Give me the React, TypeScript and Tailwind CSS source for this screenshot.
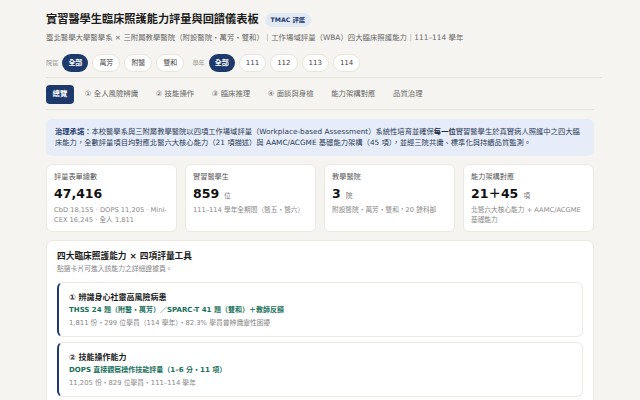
import React from 'react';

const FONT = "font-['DejaVu_Sans','Noto_Sans_CJK_TC',sans-serif]";

const campuses = ['全部', '萬芳', '附醫', '雙和'];
const years = ['全部', '111', '112', '113', '114'];
const tabs = ['總覽', '① 全人風險辨識', '② 技能操作', '③ 臨床推理', '④ 面談與身檢', '能力架構對應', '品質治理'];

const stats = [
  { label: '評量表單總數', value: '47,416', unit: '', sub: 'CbD 18,155 · DOPS 11,205 · Mini-CEX 16,245 · 全人 1,811' },
  { label: '實習醫學生', value: '859', unit: '位', sub: '111–114 學年全期間（醫五・醫六）' },
  { label: '教學醫院', value: '3', unit: '院', sub: '附設醫院・萬芳・雙和，20 餘科部' },
  { label: '能力架構對應', value: '21＋45', unit: '項', sub: '北醫六大核心能力 + AAMC/ACGME 基礎能力' },
];

const abilities = [
  {
    title: '① 辨識身心社靈高風險病患',
    tool: 'THSS 24 題（附醫・萬芳）／SPARC-T 41 題（雙和）＋教師反饋',
    meta: '1,811 份・299 位學員（114 學年）・82.3% 學員曾辨識靈性困擾',
  },
  {
    title: '② 技能操作能力',
    tool: 'DOPS 直接觀察操作技能評量（1–6 分・11 項）',
    meta: '11,205 份・829 位學員・111–114 學年',
  },
];

function Pill({ text, active }: { text: string; active?: boolean }) {
  return (
    <span
      className={
        active
          ? 'h-[18px] px-[6px] rounded-full bg-[#1e3a6d] text-white font-bold flex items-center text-[7px]'
          : 'h-[18px] px-[6px] rounded-full bg-white border border-[#e8e5dc] text-[#444] flex items-center text-[7px]'
      }
    >
      {text}
    </span>
  );
}

export default function App() {
  return (
    <div className={`min-h-[400px] bg-[#f5f4f0] ${FONT} text-[#1c1c1c]`}>
      <div className="pl-[46px] pr-[46px] pt-[12px] pb-[8px]">
        {/* Header */}
        <div className="flex items-center gap-[6px]">
          <h1 className="text-[11.2px] leading-[16px] font-bold">實習醫學生臨床照護能力評量與回饋儀表板</h1>
          <span className="h-[14px] px-[6px] rounded-full bg-[#e2e9f5] text-[#1e3a6d] text-[6.2px] font-bold flex items-center">
            TMAC 評鑑
          </span>
        </div>
        <p className="mt-[3.5px] text-[7.4px] leading-[11px] text-[#666]">
          臺北醫學大學醫學系 × 三附屬教學醫院（附設醫院・萬芳・雙和）｜工作場域評量（WBA）四大臨床照護能力｜111–114 學年
        </p>

        {/* Filters */}
        <div className="mt-[11.5px] pb-[5px] border-b border-[#e6e3da] -mr-[8px] flex items-center gap-[4px]">
          <span className="text-[6.2px] text-[#999]">院區</span>
          {campuses.map((c, i) => (
            <Pill key={c} text={c} active={i === 0} />
          ))}
          <span className="text-[6.2px] text-[#999] ml-[4px]">學年</span>
          {years.map((y, i) => (
            <Pill key={y} text={y} active={i === 0} />
          ))}
        </div>

        {/* Tabs */}
        <div className="mt-[6.5px] pb-[5px] border-b border-[#e6e3da] flex items-center gap-[4.5px]">
          {tabs.map((t, i) => (
            <span
              key={t}
              className={
                i === 0
                  ? 'h-[19px] px-[6.5px] rounded-[4px] bg-[#1e3a6d] text-white font-bold text-[7.4px] flex items-center'
                  : 'h-[19px] px-[6.5px] text-[#666] text-[7.4px] flex items-center'
              }
            >
              {t}
            </span>
          ))}
        </div>

        {/* Governance note */}
        <div className="mt-[9px] rounded-[6px] bg-[#e6edf8] px-[9px] py-[7px] text-[7.3px] leading-[11.6px] text-[#2c3b58]">
          <b className="text-[#1e3a6d]">治理承諾：</b>本校醫學系與三附屬教學醫院以四項工作場域評量（Workplace-based Assessment）系統性培育並確保
          <b className="text-[#1c2a44]">每一位</b>
          實習醫學生於真實病人照護中之四大臨床能力，全數評量項目均對應北醫六大核心能力（21 項描述）與 AAMC/ACGME 基礎能力架構（45 項），並經三院共識、標準化與持續品質監測。
        </div>

        {/* Stat cards */}
        <div className="mt-[8px] grid grid-cols-4 gap-[8px]">
          {stats.map((s) => (
            <div key={s.label} className="bg-white rounded-[6px] border border-[#ece9e1] px-[7px] pt-[6px] pb-[6px]">
              <div className="text-[7.2px] leading-[11px] text-[#555]">{s.label}</div>
              <div className="mt-[4px] flex items-baseline gap-[5px]">
                <span className="text-[12.5px] leading-[15px] font-bold text-[#111]">{s.value}</span>
                {s.unit && <span className="text-[6.8px] text-[#777]">{s.unit}</span>}
              </div>
              <div className="mt-[4px] text-[6.7px] leading-[10.3px] text-[#888]">{s.sub}</div>
            </div>
          ))}
        </div>

        {/* Abilities section */}
        <div className="mt-[8px] bg-white rounded-[7px] border border-[#ece9e1] px-[10px] pt-[9px] pb-[10px]">
          <h2 className="text-[8.7px] leading-[13px] font-bold text-[#1c1c1c]">四大臨床照護能力 × 四項評量工具</h2>
          <p className="mt-[1px] text-[6.8px] leading-[10px] text-[#888]">點選卡片可進入該能力之詳細證據頁。</p>
          <div className="mt-[8px] flex flex-col gap-[5px]">
            {abilities.map((a) => (
              <div
                key={a.title}
                className="rounded-[6px] border border-[#ece9e1] border-l-[2px] border-l-[#1e3a6d] pl-[10px] pr-[10px] pt-[8.5px] pb-[7.5px]"
              >
                <div className="text-[8px] leading-[12px] font-bold text-[#1c1c1c]">{a.title}</div>
                <div className="mt-[0.5px] text-[7px] leading-[12px] font-bold text-[#17705a]">{a.tool}</div>
                <div className="mt-[0.5px] text-[6.8px] leading-[12px] text-[#888]">{a.meta}</div>
              </div>
            ))}
          </div>
        </div>
      </div>
    </div>
  );
}
